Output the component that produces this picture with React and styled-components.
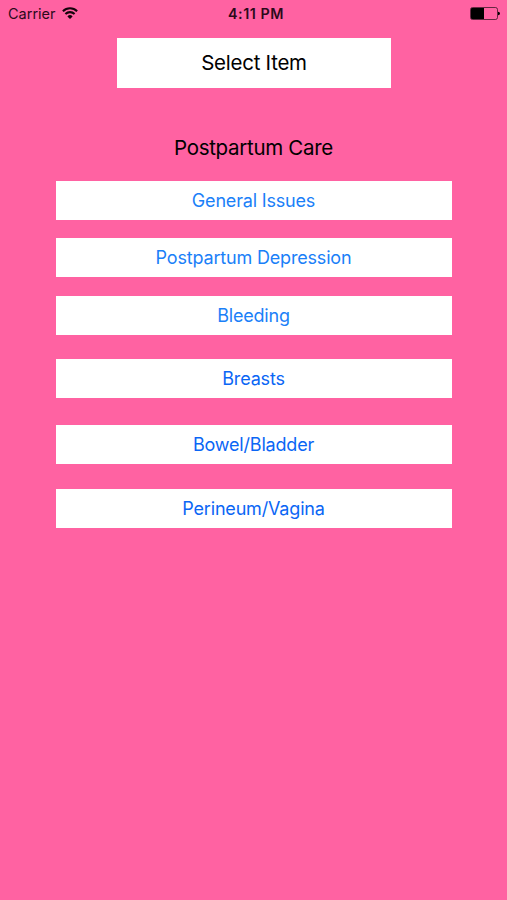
import React from "react";
import styled, { createGlobalStyle } from "styled-components";

const Global = createGlobalStyle`
  * { box-sizing: border-box; }
  body { margin: 0; background: #ff62a2; font-family: Inter, sans-serif; color: #000; }
`;

const Screen = styled.main`
  width: 507px;
  height: 900px;
  overflow: hidden;
  display: flex;
  flex-direction: column;
  align-items: center;
  background: #ff62a2;
`;

const StatusBar = styled.header`
  width: 100%;
  height: 27px;
  padding: 0 7px 0 8px;
  display: grid;
  grid-template-columns: 1fr auto 1fr;
  align-items: center;
  color: #2b0a1a;
`;

const Carrier = styled.div`
  display: flex;
  align-items: center;
  gap: 6px;
  font-size: 14.5px;
`;

const Wifi = styled.svg`
  margin-top: -1px;
`;

const Time = styled.time`
  padding-left: 4px;
  font-size: 14.3px;
  font-weight: 600;
  letter-spacing: 0.55px;
`;

const Battery = styled.svg`
  justify-self: end;
`;

const Title = styled.h1`
  width: 274px;
  height: 50px;
  margin: 11px 0 0;
  padding: 0 0 2px 1px;
  display: flex;
  align-items: center;
  justify-content: center;
  background: #fff;
  font-size: 20.5px;
  font-weight: 400;
  letter-spacing: -0.25px;
`;

const Heading = styled.h2`
  height: 30px;
  margin: 45px 0 18px;
  line-height: 30px;
  font-size: 20.5px;
  font-weight: 400;
  letter-spacing: -0.3px;
`;

const List = styled.nav`
  width: 396px;
  display: flex;
  flex-direction: column;
`;

const Item = styled.button`
  height: 39px;
  margin: 0 0 ${(p) => p.$gap}px;
  padding: 0;
  border: 0;
  background: #fff;
  color: ${(p) => p.$color};
  font: 400 18px Inter, sans-serif;
  letter-spacing: -0.18px;
`;

const items = [
  { text: "General Issues", gap: 18, color: "#1a80f8" },
  { text: "Postpartum Depression", gap: 19, color: "#1a80f8" },
  { text: "Bleeding", gap: 24, color: "#1a80f8" },
  { text: "Breasts", gap: 27, color: "#0a66f5" },
  { text: "Bowel/Bladder", gap: 25, color: "#0a66f5" },
  { text: "Perineum/Vagina", gap: 0, color: "#0a66f5" },
];

export default function App() {
  return (
    <Screen>
      <Global />
      <StatusBar>
        <Carrier>
          <span>Carrier</span>
          <Wifi width="16" height="12" viewBox="0 0 16 12" fill="none" stroke="#14030b" strokeWidth="2.1">
            <path d="M.9 4.2a10.2 10.2 0 0 1 14.2 0M3.4 7a6.6 6.6 0 0 1 9.2 0" />
            <path d="M8 12 5.4 9.4a3.7 3.7 0 0 1 5.2 0z" fill="#14030b" stroke="none" />
          </Wifi>
        </Carrier>
        <Time>4:11 PM</Time>
        <Battery width="30" height="13" viewBox="0 0 30 13">
          <rect x=".5" y=".5" width="27" height="12" rx="2" fill="none" stroke="#000" strokeOpacity=".6" />
          <path d="M2 1h12v11H2a1 1 0 0 1-1-1V2a1 1 0 0 1 1-1z" />
          <path d="M28 4.7q2 .3 2 1.8t-2 1.8z" />
        </Battery>
      </StatusBar>
      <Title>Select Item</Title>
      <Heading>Postpartum Care</Heading>
      <List>
        {items.map((i) => (
          <Item key={i.text} $gap={i.gap} $color={i.color}>{i.text}</Item>
        ))}
      </List>
    </Screen>
  );
}
